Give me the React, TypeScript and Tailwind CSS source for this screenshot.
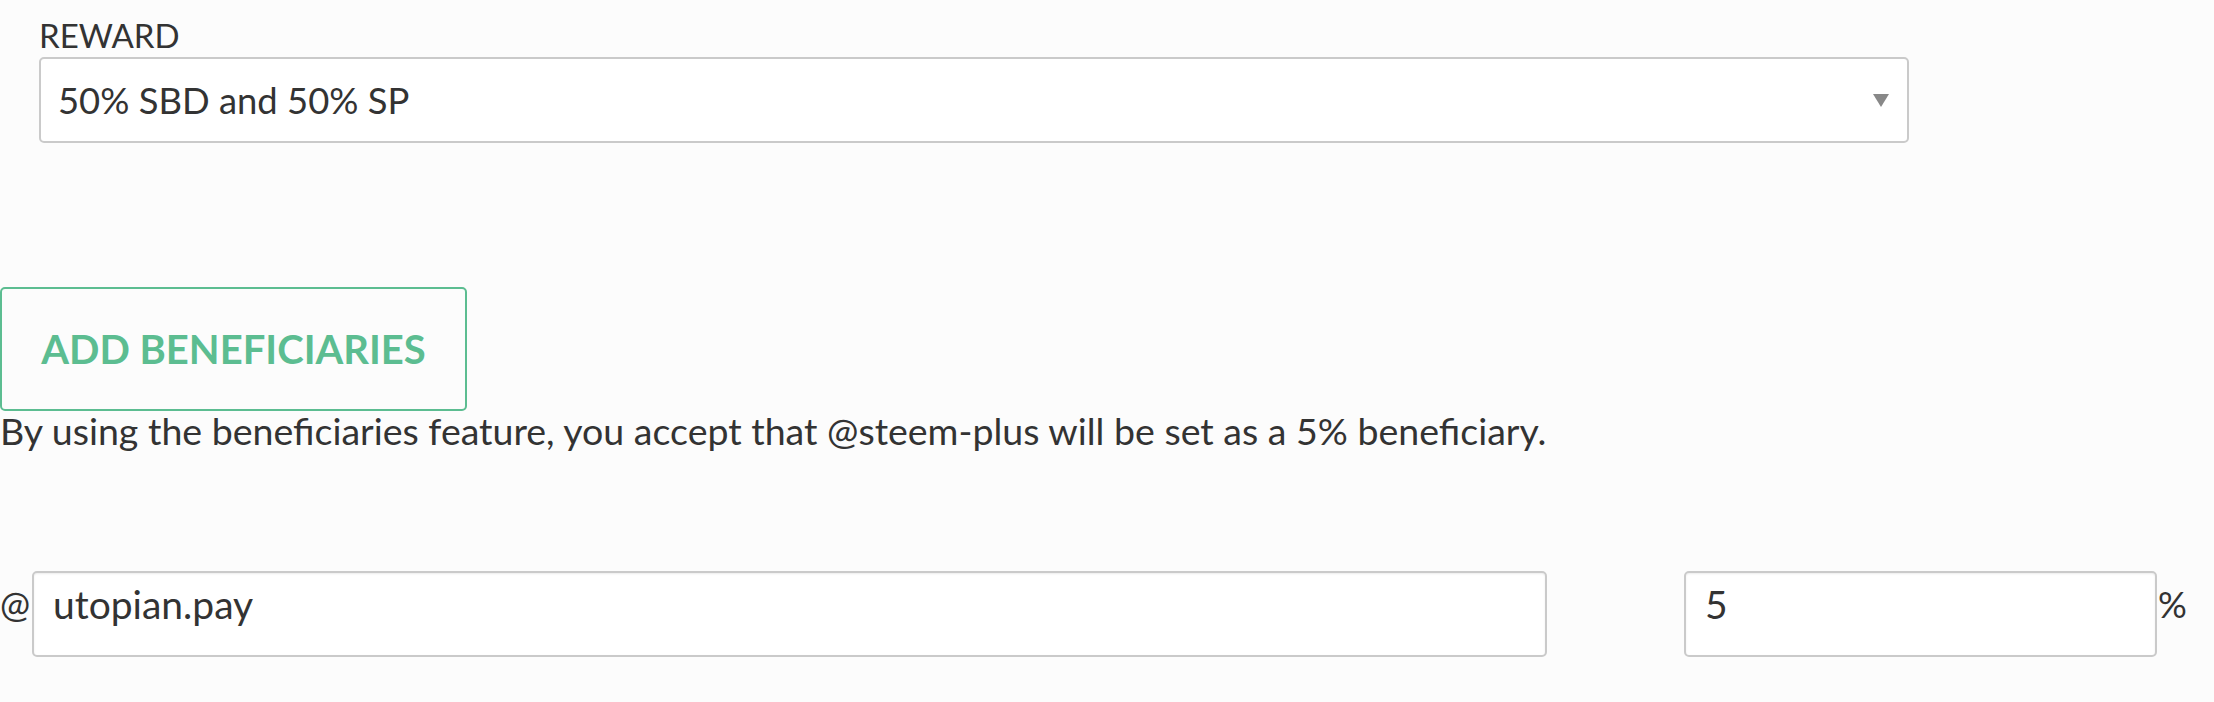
import React from "react";

export default function App() {
  return (
    <div className="min-h-screen w-[2214px] bg-[#fcfcfc] text-[#333] font-['Lato','Noto_Sans',sans-serif]">
      <div className="pl-[39px] w-[1909px]">
        <div className="pt-[14px] text-[33px] leading-[42px]">REWARD</div>
        <div className="mt-[1px] relative flex items-center h-[86px] border-2 border-[#cacaca] rounded-[5px] bg-white pl-[17px] text-[36.4px]">
          <span>50% SBD and 50% SP</span>
          <svg className="absolute right-[18px] top-[35px]" width="16" height="13" viewBox="0 0 16 13">
            <polygon points="0,0 16,0 8,13" fill="#888" />
          </svg>
        </div>
      </div>

      <div className="mt-[144px]">
        <button className="w-[467px] h-[124px] border-2 border-[#5cbd91] rounded-[5px] text-[#5cbd91] font-bold text-[40px] bg-transparent">
          ADD BENEFICIARIES
        </button>
        <p className="text-[37.5px] leading-[40px]">
          By using the beneficiaries feature, you accept that @steem-plus will be set as a 5% beneficiary.
        </p>
      </div>

      <div className="mt-[120px] flex items-start">
        <span className="text-[36px] leading-[43px] pt-[12px] w-[32px]">@</span>
        <input
          readOnly
          value="utopian.pay"
          className="w-[1515px] h-[86px] border-2 border-[#cacaca] rounded-[5px] bg-white pl-[19px] pb-[21px] text-[39px] text-[#333] outline-none shadow-[inset_0_1px_2px_rgba(0,0,0,0.08)]"
        />
        <input
          readOnly
          value="5"
          className="ml-[137px] w-[473px] h-[86px] border-2 border-[#cacaca] rounded-[5px] bg-white pl-[19px] pb-[21px] text-[39px] text-[#333] outline-none shadow-[inset_0_1px_2px_rgba(0,0,0,0.08)]"
        />
        <span className="text-[36px] leading-[43px] pt-[12px] pl-[1px]">%</span>
      </div>
    </div>
  );
}
